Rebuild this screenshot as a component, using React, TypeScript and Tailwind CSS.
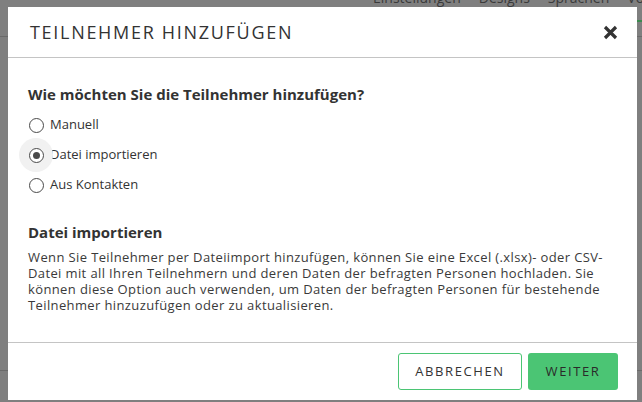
import React, { useState } from 'react';

const options = ['Manuell', 'Datei importieren', 'Aus Kontakten'];

const Radio: React.FC<{ label: string; checked: boolean; onSelect: () => void }> = ({ label, checked, onSelect }) => (
  <label className="flex items-center h-[30px] cursor-pointer" onClick={onSelect}>
    <span className="relative w-[16px] h-[16px] flex items-center justify-center">
      {checked && <span className="absolute w-[34px] h-[34px] rounded-full bg-[#f1f1f1]" />}
      <span className="relative w-[15px] h-[15px] rounded-full border-[1.5px] border-[#4a4a4a] bg-white flex items-center justify-center">
        {checked && <span className="w-[7px] h-[7px] rounded-full bg-[#4a4a4a]" />}
      </span>
    </span>
    <span className="ml-[6px] text-[13px] text-[#333]">{label}</span>
  </label>
);

export default function App() {
  const [selected, setSelected] = useState(1);

  return (
    <div className="relative w-[642px] h-[402px] overflow-hidden bg-[#7f7f7f] font-['Open_Sans',sans-serif]">
      {/* dimmed page behind the dialog */}
      <div className="h-[37px] border-b border-[#6a6a6a] flex items-start pl-[373px]">
        <div className="flex gap-[18px] -mt-[9px] text-[14px] leading-[14px] text-[#3a3a3a] whitespace-nowrap">
          <span>Einstellungen</span>
          <span>Designs</span>
          <span>Sprachen</span>
          <span className="border-b-2 border-[#3c8a4f] pb-[15px]">Vorschau</span>
        </div>
      </div>
      <div className="h-[334px] border-b border-[#6a6a6a]" />

      <div className="absolute left-[8px] top-[7px] w-[629px] h-[393px] bg-white flex flex-col">
        <div className="h-[51px] shrink-0 flex items-center justify-between pl-[22px] pr-[19px] border-b border-[#c4c4c4]">
          <h2 className="text-[18px] tracking-[1.7px] text-[#333] font-normal">TEILNEHMER HINZUFÜGEN</h2>
          <svg width="15" height="15" viewBox="0 0 15 15" className="text-[#333]">
            <path d="M2 2 L13 13 M13 2 L2 13" stroke="currentColor" strokeWidth="3.2" strokeLinecap="butt" />
          </svg>
        </div>

        <div className="flex-1 pl-[20px] pr-[20px] pt-[26px]">
          <h3 className="text-[15px] font-bold text-[#333] leading-[20px]">Wie möchten Sie die Teilnehmer hinzufügen?</h3>
          <div className="mt-[6px] flex flex-col">
            {options.map((o, i) => (
              <Radio key={o} label={o} checked={selected === i} onSelect={() => setSelected(i)} />
            ))}
          </div>
          <h3 className="mt-[22px] text-[15px] font-bold text-[#333] leading-[20px]">Datei importieren</h3>
          <p className="mt-[7px] text-[13px] leading-[16px] tracking-[0.38px] text-[#3a3a3a]">
            Wenn Sie Teilnehmer per Dateiimport hinzufügen, können Sie eine Excel (.xlsx)- oder CSV-Datei mit all Ihren
            Teilnehmern und deren Daten der befragten Personen hochladen. Sie können diese Option auch verwenden, um
            Daten der befragten Personen für bestehende Teilnehmer hinzuzufügen oder zu aktualisieren.
          </p>
        </div>

        <div className="h-[58px] shrink-0 border-t border-[#c4c4c4] flex justify-end items-start pt-[10px] pr-[19px] gap-[6px]">
          <button className="w-[124px] h-[37px] rounded-[3px] border border-[#4bc574] bg-white text-[13px] tracking-[1.6px] text-[#333]">
            ABBRECHEN
          </button>
          <button className="w-[90px] h-[37px] rounded-[3px] bg-[#4bc574] text-[13px] tracking-[1.6px] text-[#2a2a2a]">
            WEITER
          </button>
        </div>
      </div>
    </div>
  );
}
